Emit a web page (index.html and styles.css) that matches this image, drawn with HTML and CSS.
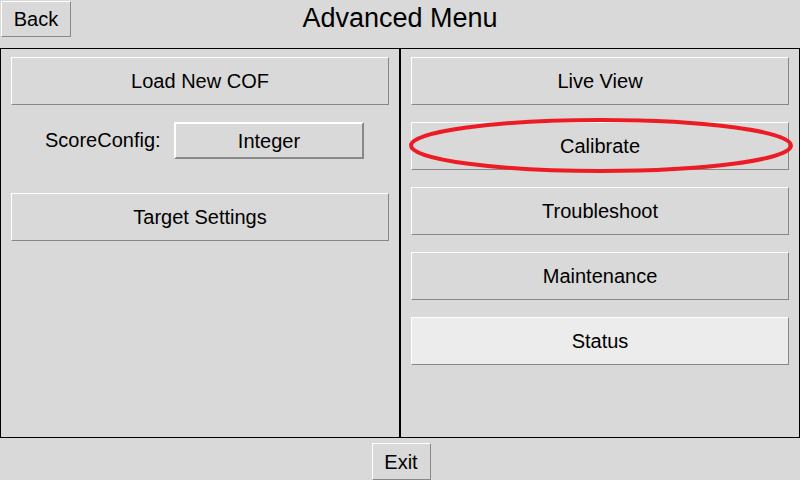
FILE: index.html
```html
<!DOCTYPE html>
<html>
<head>
<meta charset="utf-8">
<link rel="stylesheet" href="styles.css">
</head>
<body>
<div class="app">
  <header class="header">
    <div class="header-left"><button class="btn btn-small">Back</button></div>
    <h1 class="title">Advanced Menu</h1>
    <div class="header-right"></div>
  </header>
  <main class="panels">
    <section class="panel">
      <button class="btn btn-big">Load New COF</button>
      <div class="score-row">
        <span class="score-label">ScoreConfig:</span>
        <button class="btn btn-option">Integer</button>
      </div>
      <button class="btn btn-big">Target Settings</button>
    </section>
    <section class="panel panel-right">
      <button class="btn btn-big">Live View</button>
      <div class="highlight-wrap">
        <button class="btn btn-big">Calibrate</button>
        <svg class="ring" width="388" height="59" viewBox="0 0 388 59">
          <ellipse cx="194" cy="29.5" rx="190" ry="25.5" fill="none" stroke="#ed1c24" stroke-width="4"/>
        </svg>
      </div>
      <button class="btn btn-big">Troubleshoot</button>
      <button class="btn btn-big">Maintenance</button>
      <button class="btn btn-big btn-active">Status</button>
    </section>
  </main>
  <footer class="footer">
    <button class="btn btn-exit">Exit</button>
  </footer>
</div>
</body>
</html>
```

FILE: styles.css
```css
* { box-sizing: border-box; }
html, body {
  margin: 0;
  padding: 0;
  background: #d9d9d9;
}
body {
  width: 800px;
  height: 480px;
  overflow: hidden;
  font-family: "Liberation Sans", Arial, sans-serif;
  color: #000;
}
.app {
  display: flex;
  flex-direction: column;
  width: 800px;
  height: 480px;
}
.header {
  height: 48px;
  display: grid;
  grid-template-columns: 1fr auto 1fr;
  align-items: start;
}
.header-left {
  padding: 1px 0 0 1px;
}
.title {
  margin: 3px 0 0 0;
  font-size: 27px;
  font-weight: normal;
  line-height: 31px;
  text-align: center;
}
.btn {
  font-family: "Liberation Sans", Arial, sans-serif;
  font-size: 20px;
  color: #000;
  background: #d9d9d9;
  border: 1px solid;
  border-color: #ffffff #888888 #888888 #ffffff;
  border-radius: 0;
  margin: 0;
  padding: 0;
  display: flex;
  align-items: center;
  justify-content: center;
  line-height: 1;
}
.btn-small {
  width: 70px;
  height: 36px;
}
.panels {
  display: flex;
  height: 390px;
}
.panel {
  width: 400px;
  height: 390px;
  border: 1px solid #000;
  padding: 8px 10px;
  display: flex;
  flex-direction: column;
  gap: 17px;
}
.btn-big {
  width: 378px;
  height: 48px;
  flex: none;
}
.btn-active {
  background: #ececec;
}
.score-row {
  display: flex;
  align-items: center;
  height: 37px;
  padding-left: 34px;
  margin-bottom: 17px;
}
.score-label {
  font-size: 20px;
  width: 129px;
}
.btn-option {
  width: 190px;
  height: 37px;
  border-width: 2px;
}
.highlight-wrap {
  position: relative;
  width: 378px;
  height: 48px;
}
.ring {
  position: absolute;
  left: -4px;
  top: -6px;
  pointer-events: none;
}
.footer {
  flex: 1;
  display: flex;
  justify-content: center;
  padding: 5px 0 0 2px;
}
.btn-exit {
  width: 59px;
  height: 37px;
}
```
